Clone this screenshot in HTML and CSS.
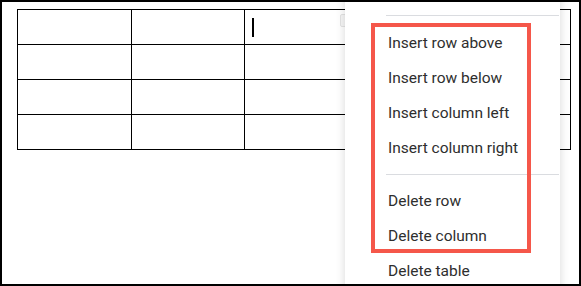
FILE: index.html
```html
<!DOCTYPE html>
<html lang="en">
<head>
    <meta charset="UTF-8">
    <title>Table context menu</title>
    <link rel="stylesheet" href="styles.css">
</head>
<body>
    <div class="frame">
        <div class="doc-table">
            <div class="cell"></div><div class="cell"></div><div class="cell"><span class="caret"></span></div><div class="cell"></div><div class="cell"></div>
            <div class="cell"></div><div class="cell"></div><div class="cell"></div><div class="cell"></div><div class="cell"></div>
            <div class="cell"></div><div class="cell"></div><div class="cell"></div><div class="cell"></div><div class="cell"></div>
            <div class="cell"></div><div class="cell"></div><div class="cell"></div><div class="cell"></div><div class="cell"></div>
        </div>

        <div class="col-handle"></div>

        <div class="context-menu">
            <div class="menu-divider top"></div>
            <div class="menu-item">Insert row above</div>
            <div class="menu-item">Insert row below</div>
            <div class="menu-item">Insert column left</div>
            <div class="menu-item">Insert column right</div>
            <div class="menu-divider"></div>
            <div class="menu-item">Delete row</div>
            <div class="menu-item">Delete column</div>
            <div class="menu-item">Delete table</div>
        </div>

        <div class="highlight"></div>
    </div>
</body>
</html>
```

FILE: styles.css
```css
* {
    box-sizing: border-box;
    margin: 0;
    padding: 0;
}
body {
    font-family: 'Roboto', 'Liberation Sans', sans-serif;
    background-color: white;
    color: #333;
}
.frame {
    position: relative;
    width: 581px;
    height: 286px;
    border: 2px solid #000;
    overflow: hidden;
    padding: 7px 0 0 15px;
    background-color: white;
}
.doc-table {
    display: grid;
    grid-template-columns: 114px 113px 109px 109px 108px;
    grid-auto-rows: 35px;
    width: 554px;
    border-left: 1px solid #000;
    border-top: 1px solid #000;
}
.cell {
    border-right: 1px solid #000;
    border-bottom: 1px solid #000;
}
.caret {
    display: block;
    width: 2px;
    height: 19px;
    margin: 8px 0 0 7px;
    background-color: #000;
}
.col-handle {
    position: absolute;
    left: 338px;
    top: 12px;
    width: 9px;
    height: 13px;
    border: 1px solid #e4e4e4;
    border-radius: 2px;
    background-color: #f6f6f6;
}
.context-menu {
    position: absolute;
    left: 343px;
    top: -10px;
    bottom: -20px;
    width: 215px;
    background-color: white;
    box-shadow: 0 0 9px rgba(0, 0, 0, 0.16);
    padding-top: 23px;
}
.menu-item {
    height: 35px;
    line-height: 35px;
    padding-left: 43px;
    font-size: 15.5px;
    color: #2e2e2e;
    white-space: nowrap;
}
.menu-divider {
    height: 1px;
    margin: 8px 1px 9px 41px;
    background-color: #dadce0;
}
.menu-divider.top {
    margin-top: 0;
    margin-bottom: 10px;
}
.highlight {
    position: absolute;
    left: 369px;
    top: 21px;
    width: 160px;
    height: 230px;
    border: 4px solid #f5574a;
}
```
